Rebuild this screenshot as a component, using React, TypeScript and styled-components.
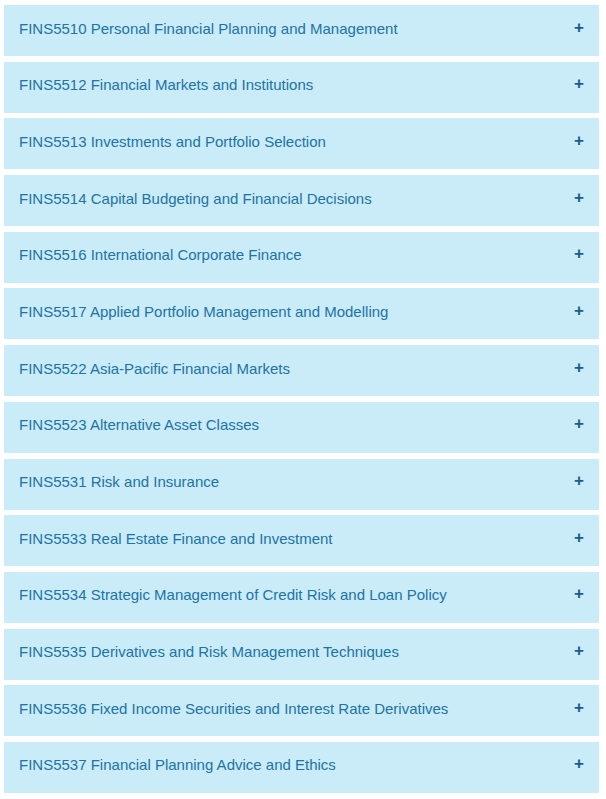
import React from 'react';
import styled, {createGlobalStyle} from "styled-components";

const courses = [
    'FINS5510 Personal Financial Planning and Management',
    'FINS5512 Financial Markets and Institutions',
    'FINS5513 Investments and Portfolio Selection',
    'FINS5514 Capital Budgeting and Financial Decisions',
    'FINS5516 International Corporate Finance',
    'FINS5517 Applied Portfolio Management and Modelling',
    'FINS5522 Asia-Pacific Financial Markets',
    'FINS5523 Alternative Asset Classes',
    'FINS5531 Risk and Insurance',
    'FINS5533 Real Estate Finance and Investment',
    'FINS5534 Strategic Management of Credit Risk and Loan Policy',
    'FINS5535 Derivatives and Risk Management Techniques',
    'FINS5536 Fixed Income Securities and Interest Rate Derivatives',
    'FINS5537 Financial Planning Advice and Ethics',
];

const App = () => {
    return (
        <>
            <GlobalStyle/>
            <StyledList>
                {courses.map(c => (
                    <Panel key={c}>
                        <Title>{c}</Title>
                        <Plus>+</Plus>
                    </Panel>
                ))}
                <Panel/>
            </StyledList>
        </>
    );
};

const GlobalStyle = createGlobalStyle`
  body {
    margin: 0;
    background: #ffffff;
    font-family: "Liberation Sans", Arial, sans-serif;
  }
`

const StyledList = styled.div`
  display: flex;
  flex-direction: column;
  gap: 5.69px;
  padding: 5px 7px 0 4px;
`

const Panel = styled.div`
  height: 51px;
  box-sizing: border-box;
  background-color: #c9ecf8;
  display: flex;
  align-items: center;
  justify-content: space-between;
  padding: 0 15px 5px 15px;
  flex-shrink: 0;
`

const Title = styled.span`
  font-size: 15px;
  color: #2173a6;
`

const Plus = styled.span`
  font-size: 17px;
  font-weight: 700;
  color: #1b5e8a;
  margin-top: -1px;
`

export default App;
